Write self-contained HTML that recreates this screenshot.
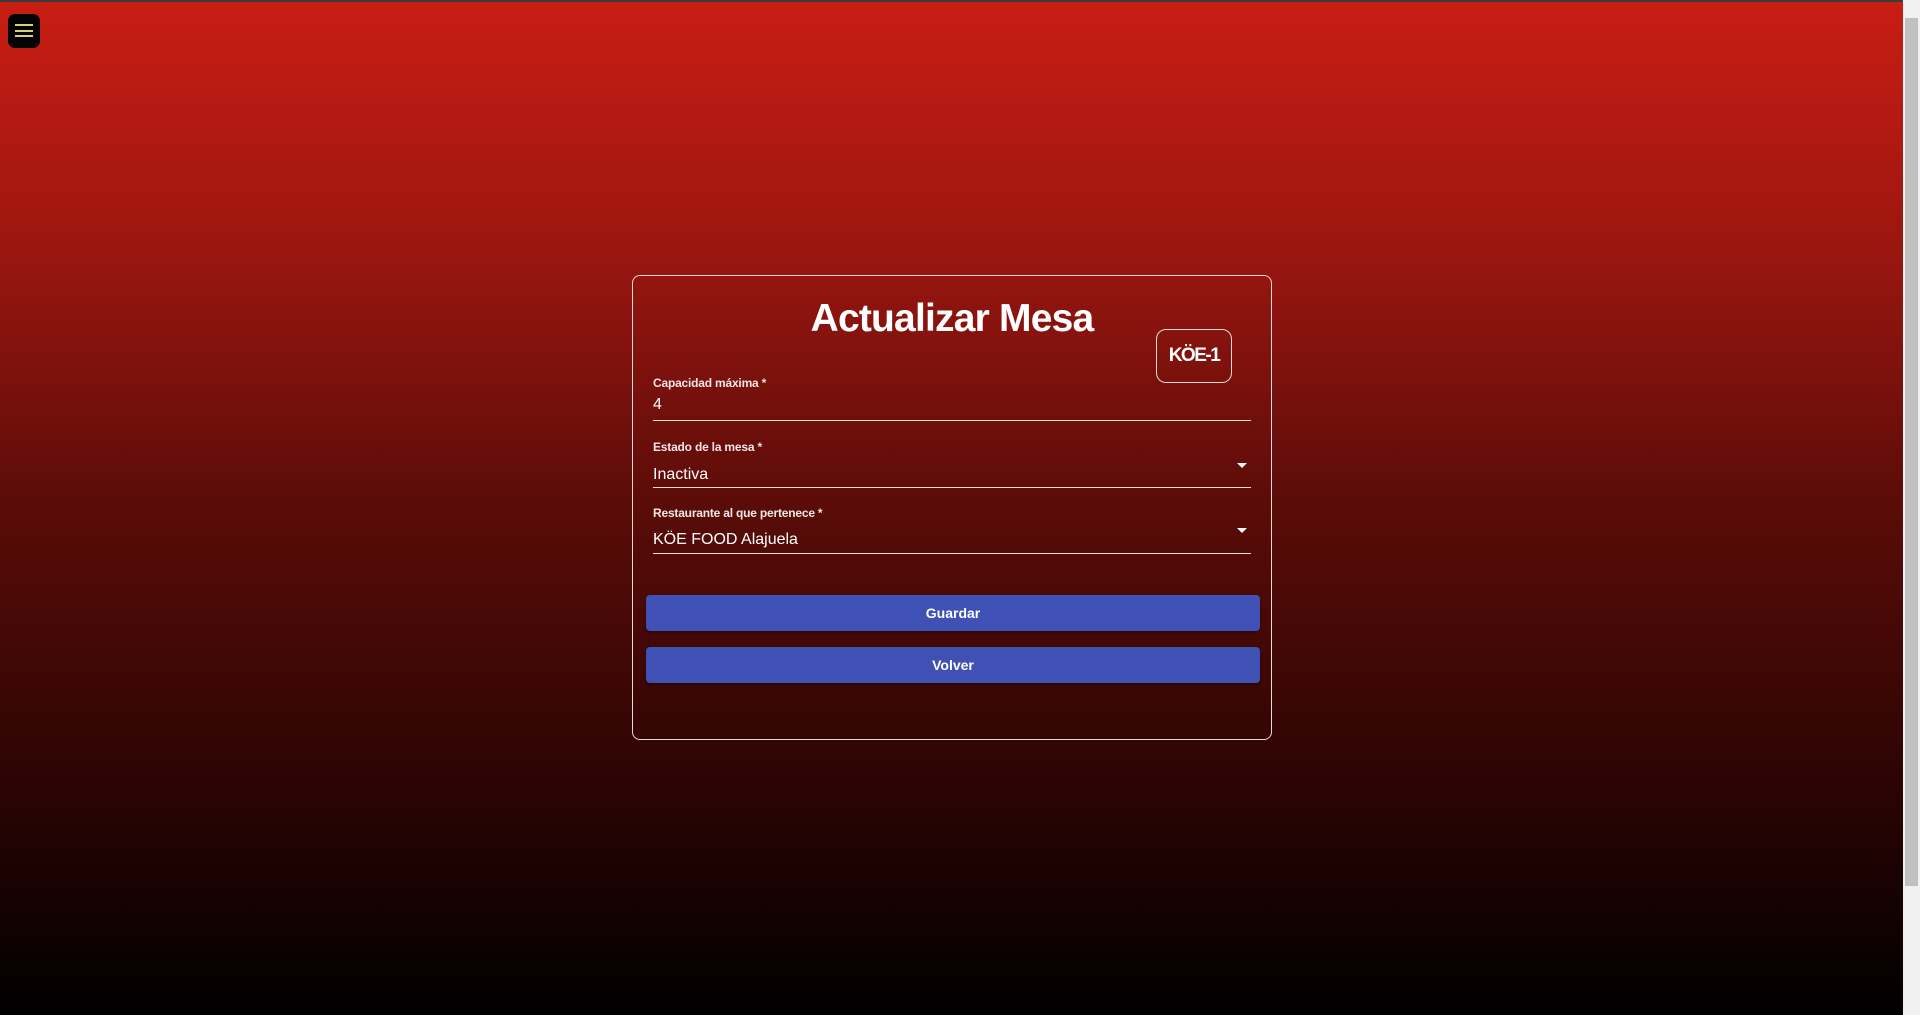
<!DOCTYPE html>
<html><head><meta charset="utf-8"><style>
*{margin:0;padding:0;box-sizing:border-box}
html,body{width:1920px;height:1015px;overflow:hidden}
body{background:linear-gradient(to bottom,#c91d13 0%,#9a1610 25%,#5a0c08 50%,#2a0403 78%,#000 100%);font-family:"Liberation Sans",sans-serif;color:#fff;position:relative}
.topline{position:absolute;left:0;top:0;width:1903px;height:2px;background:#3a3a3a}
.sb{position:absolute;right:0;top:0;width:17px;height:1015px;background:#f0f0f0}
.thumb{position:absolute;left:2px;top:18px;width:13px;height:868px;background:#c0c0c0}
.menu{position:absolute;left:8px;top:14px;width:32px;height:34px;background:#050505;border-radius:7px}
.menu i{position:absolute;left:7px;width:18px;height:2px;background:#d6d27c}
.card{position:absolute;left:632px;top:275px;width:640px;height:465px;border:1px solid #e8d8d8;border-radius:8px}
h1{position:absolute;left:0;width:100%;top:21px;text-align:center;font-size:39px;font-weight:bold;letter-spacing:-0.8px}
.badge{position:absolute;left:523px;top:53px;width:76px;height:54px;border:1px solid #e8d8d8;border-radius:10px;font-weight:bold;font-size:19px;text-align:center;line-height:52px;letter-spacing:-1.5px}
.f{position:absolute;left:20px;width:598px;border-bottom:1px solid #f0e0e0}
.f .l{position:absolute;left:0;font-size:12px;font-weight:bold;color:#f3e6e6;letter-spacing:-0.2px}
.f .v{position:absolute;left:0;font-size:16px}
.arr{position:absolute;right:4px;width:0;height:0;border-left:5px solid transparent;border-right:5px solid transparent;border-top:5px solid #fff}
.btn{position:absolute;left:13px;width:614px;height:36px;background:#3f51b5;border-radius:4px;text-align:center;line-height:36px;font-weight:bold;font-size:14px;box-shadow:0 2px 3px rgba(0,0,0,.3)}
</style></head><body>
<div class="topline"></div>
<div class="menu"><i style="top:10px"></i><i style="top:16px"></i><i style="top:21px"></i></div>
<div class="card">
<h1>Actualizar Mesa</h1>
<div class="badge">KÖE-1</div>
<div class="f" style="top:100px;height:45px"><span class="l" style="top:0">Capacidad máxima *</span><span class="v" style="top:20px">4</span></div>
<div class="f" style="top:164px;height:48px"><span class="l" style="top:0">Estado de la mesa *</span><span class="v" style="top:26px">Inactiva</span><span class="arr" style="top:23px"></span></div>
<div class="f" style="top:230px;height:48px"><span class="l" style="top:0">Restaurante al que pertenece *</span><span class="v" style="top:25px">KÖE FOOD Alajuela</span><span class="arr" style="top:22px"></span></div>
<div class="btn" style="top:319px">Guardar</div>
<div class="btn" style="top:371px">Volver</div>
</div>
<div class="sb"><div class="thumb"></div></div>
</body></html>
